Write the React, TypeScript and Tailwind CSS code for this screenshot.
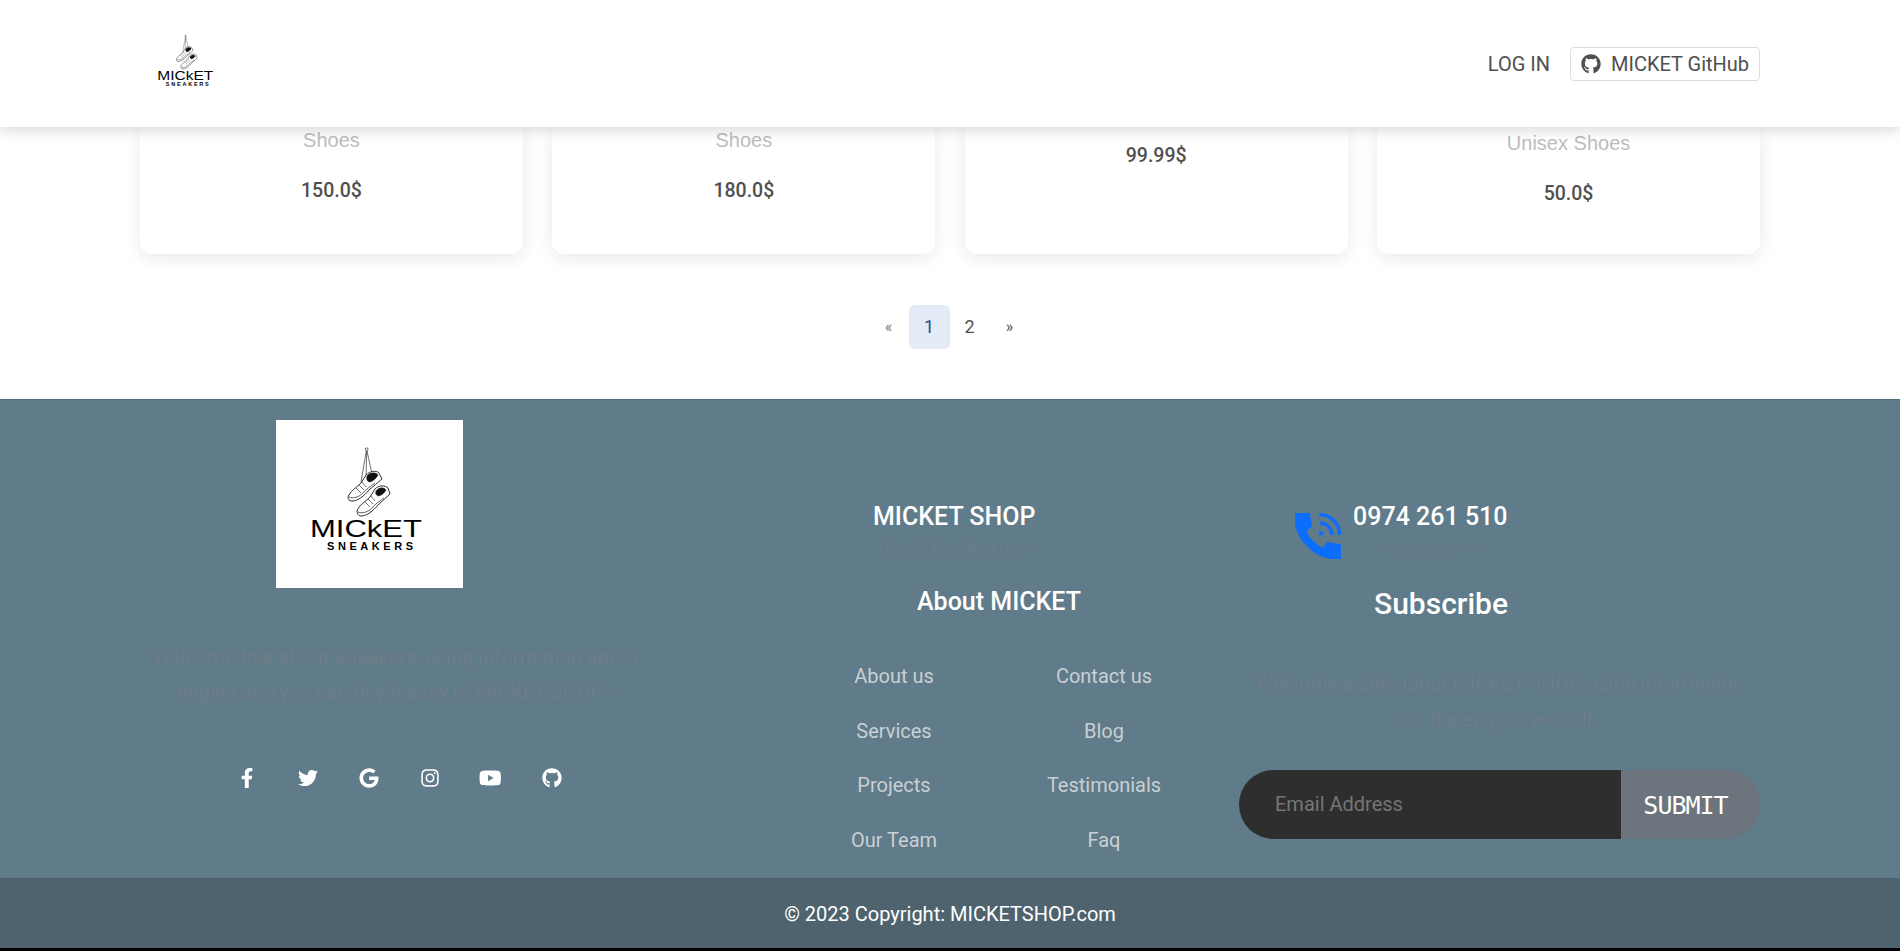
import {
  FaFacebookF,
  FaGithub,
  FaGoogle,
  FaInstagram,
  FaTwitter,
  FaYoutube,
} from "react-icons/fa";

const Logo = ({ className }: { className: string }) => (
  <svg viewBox="0 0 187 168" className={className}>
    <circle cx="90.7" cy="29.3" r="1.4" fill="none" stroke="#222" strokeWidth="0.7" />
    <path d="M90.3 31L85 62M91 31L96 54M90.7 31L90 58" stroke="#333" strokeWidth="0.7" fill="none" />
    <g stroke="#1a1a1a" fill="#fff">
      <path
        d="M72 77C74 71 80 68 85 63L90 55C94 51 100 50 103 53L106 59C102 63 97 66 93 70C88 76 82 81 76 81C73 81 72 79 72 77Z"
        strokeWidth="0.9"
      />
      <path d="M73 77C77 79 83 77 87 73C90 69 95 66 99 63" fill="none" strokeWidth="0.7" />
      <path d="M91 56C94 52 100 52 102 55C100 59 96 62 93 62C91 61 90 58 91 56Z" fill="#111" strokeWidth="0.5" />
      <path d="M80 68L85 73M83 65L88 70M86 62L90 67" fill="none" strokeWidth="0.6" />
      <path
        d="M81 91C83 85 89 82 94 77L99 69C103 65 109 65 112 68L114 74C110 78 106 81 102 85C97 91 91 96 85 96C82 96 81 93 81 91Z"
        strokeWidth="0.9"
      />
      <path d="M82 92C86 94 92 92 96 88C99 84 104 81 108 78" fill="none" strokeWidth="0.7" />
      <path d="M100 71C103 67 108 67 110 70C108 74 104 76 102 76C100 75 99 73 100 71Z" fill="#111" strokeWidth="0.5" />
      <path d="M89 82L94 87M92 79L97 84M95 76L99 81" fill="none" strokeWidth="0.6" />
    </g>
    <text
      x="34"
      y="117"
      fontFamily="Liberation Sans, sans-serif"
      fontSize="24"
      textLength="112"
      lengthAdjust="spacingAndGlyphs"
      fill="#000"
    >
      MICkET
    </text>
    <text
      x="51"
      y="130"
      fontFamily="Liberation Sans, sans-serif"
      fontSize="11"
      fontWeight="700"
      textLength="86"
      lengthAdjust="spacing"
      fill="#000"
    >
      SNEAKERS
    </text>
  </svg>
);

const PhoneIcon = () => (
  <svg viewBox="3 3 18 18" className="w-[46px] h-[46px] shrink-0 mt-[12px] text-[#0d6efd]" fill="currentColor">
    <path
      d="M20.01 15.38c-1.23 0-2.42-.2-3.53-.56-.35-.12-.74-.03-1.01.24l-1.57 1.97c-2.83-1.35-5.48-3.9-6.89-6.83l1.95-1.66c.27-.28.35-.67.24-1.02-.37-1.11-.56-2.3-.56-3.53 0-.54-.45-.99-.99-.99H4.19C3.65 3 3 3.24 3 3.99 3 13.28 10.73 21 20.01 21c.71 0 .99-.63.99-1.18v-3.45c0-.54-.45-.99-.99-.99z"
      stroke="currentColor"
      strokeWidth="0.7"
    />
    <circle cx="13.2" cy="10.9" r="0.9" />
    <path d="M12.8 6.9a4.6 4.6 0 0 1 4.6 4.6M12.5 3.6a8 8 0 0 1 8 8" fill="none" stroke="currentColor" strokeWidth="1.3" />
  </svg>
);

const socials = [
  { Icon: FaFacebookF, size: "w-5 h-5" },
  { Icon: FaTwitter, size: "w-5 h-5" },
  { Icon: FaGoogle, size: "w-5 h-5" },
  { Icon: FaInstagram, size: "w-5 h-5" },
  { Icon: FaYoutube, size: "w-[22.5px] h-5" },
  { Icon: FaGithub, size: "w-5 h-5" },
];

const links = [
  ["About us", "Contact us"],
  ["Services", "Blog"],
  ["Projects", "Testimonials"],
  ["Our Team", "Faq"],
];

const App = () => {
  return (
    <div className="h-[951px] overflow-hidden bg-white font-['Roboto',sans-serif] text-[#4f4f4f]">
      <header className="relative z-10 flex h-[127px] items-center justify-between bg-white pl-[140px] pr-[140px] shadow-[0_4px_12px_rgba(0,0,0,0.14)]">
        <Logo className="w-[94px] h-[84px] -mt-[1px]" />
        <div className="flex items-center gap-5 text-[20px]">
          <span>LOG IN</span>
          <span className="flex h-[34px] w-[190px] items-center gap-[10px] rounded border border-[#dcdcdc] pl-[10px]">
            <FaGithub className="text-[20px]" />
            MICKET GitHub
          </span>
        </div>
      </header>

      <main className="h-[272px]">
        <div className="grid grid-cols-4 gap-[29.5px] px-[140px]">
          {[
            { sub: "Shoes", price: "150.0$", pt: "pt-px" },
            { sub: "Shoes", price: "180.0$", pt: "pt-px" },
            { sub: "", price: "99.99$", pt: "pt-[17px]" },
            { sub: "Unisex Shoes", price: "50.0$", pt: "pt-[4px]" },
          ].map((card) => (
            <div
              key={card.price}
              className={`flex h-[127px] flex-col items-center rounded-b-xl bg-white shadow-[0_4px_18px_rgba(0,0,0,0.09)] ${card.pt}`}
            >
              {card.sub && (
                <div className="mb-[27px] h-6 font-['Liberation_Sans',sans-serif] text-[20px] leading-6 text-[#bdbdbd]">
                  {card.sub}
                </div>
              )}
              <div className="text-[19.5px] font-medium leading-6">{card.price}</div>
            </div>
          ))}
        </div>

        <nav className="mt-[51px] flex items-center justify-center pr-[2px] text-[18px] leading-[42px]">
          <span className="flex h-11 w-10 items-center justify-center text-[16px] text-[#777]">«</span>
          <span className="flex h-11 w-[41px] items-center justify-center rounded-md bg-[#e3ebf7] text-[#2c4d85]">1</span>
          <span className="flex h-11 w-10 items-center justify-center">2</span>
          <span className="flex h-11 w-10 items-center justify-center text-[16px]">»</span>
        </nav>
      </main>

      <footer className="h-[479px] border-t border-[#55707c] bg-[#607b89]">
        <div className="flex pl-[140px]">
          <div className="w-[510px] pt-[20px]">
            <div className="ml-[136px] h-[168px] w-[187px] bg-white">
              <Logo className="h-full w-full" />
            </div>
            <p className="mt-[52px] text-center text-[20px] leading-[35px] text-[#6d7d88]">
              Welcome this about Sneakers, using information about
              <br />
              engine and you can buy it easy in MICKET SHOP !
            </p>
            <div className="ml-[76px] mt-[58px] flex text-white">
              {socials.map(({ Icon, size }, i) => (
                <span key={i} className="flex w-[61px] justify-center">
                  <Icon className={size} />
                </span>
              ))}
            </div>
          </div>

          <div className="ml-[139px] w-[420px] pt-[101px]">
            <div className="ml-[84px] w-[162px] text-center">
              <div className="text-[25px] font-medium leading-8 text-white whitespace-nowrap">MICKET SHOP</div>
              <div className="whitespace-nowrap text-[16px] leading-8 text-[#6d7d88]">Tp. Hồ Chí Minh City</div>
            </div>
            <h3 className="mt-[21px] text-center text-[25px] font-medium leading-8 text-white">About MICKET</h3>
            <div className="mt-[31px] grid grid-cols-2 text-center text-[20px] leading-[54.6px] text-[#c9d0d4]">
              {links.flat().map((link) => (
                <span key={link}>{link}</span>
              ))}
            </div>
          </div>

          <div className="ml-[30px] w-[521px] pt-[101px]">
            <div className="ml-[56px] flex gap-[12px]">
              <PhoneIcon />
              <div className="text-center">
                <div className="text-[25px] font-medium leading-8 text-white">0974 261 510</div>
                <div className="text-[14px] leading-8 text-[#6d7d88]">Contact for me</div>
              </div>
            </div>
            <h3 className="ml-[135px] mt-[19px] text-[30px] font-medium leading-10 text-white">Subscribe</h3>
            <p className="mt-[41px] text-center text-[20px] leading-[36px] text-[#6d7d88]">
              Welcome a site about MICKET SHOP, using information
              <br />
              on the engine, we sell.
            </p>
            <div className="mt-[33px] flex h-[69px] overflow-hidden rounded-full">
              <div className="flex w-[382px] items-center bg-[#2e2e2e] pb-[2px] pl-9 text-[20px] text-[#757575]">Email Address</div>
              <div className="flex flex-1 items-center justify-center bg-[#6c757d] pr-[10px] pt-[3px] font-['DejaVu_Sans_Mono',monospace] text-[25px] tracking-[-1px] text-white">
                SUBMIT
              </div>
            </div>
          </div>
        </div>
      </footer>

      <div className="flex h-[70px] items-center justify-center bg-[#4e636e] pt-px text-[20px] text-white">
        © 2023 Copyright: MICKETSHOP.com
      </div>
      <div className="h-[3px] bg-black" />
    </div>
  );
};

export default App;
